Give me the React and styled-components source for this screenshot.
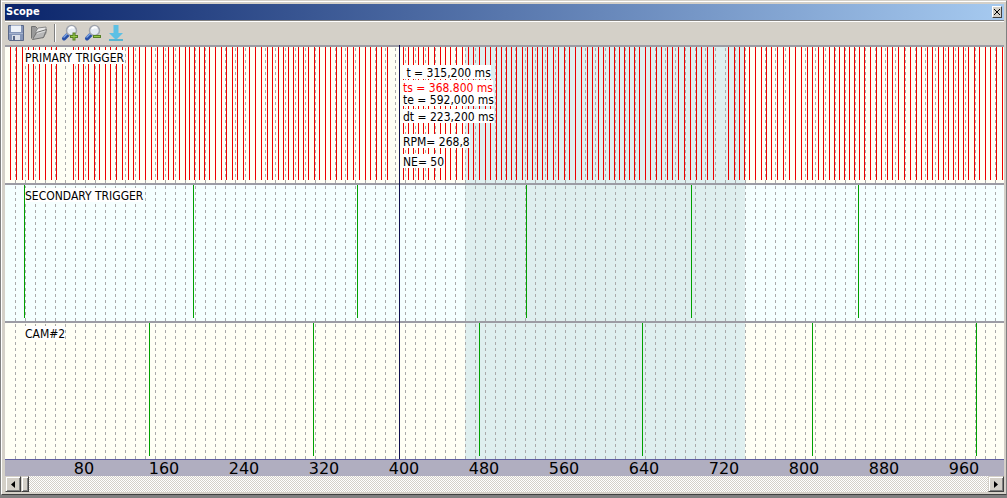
import React from "react";
import styled, { createGlobalStyle } from "styled-components";

const GlobalStyle = createGlobalStyle`
  * {
    box-sizing: border-box;
  }
  body {
    margin: 0;
    background: #808080;
    font-family: "DejaVu Sans Condensed", "DejaVu Sans", sans-serif;
    font-size: 12px;
    color: #000;
  }
`;

const Window = styled.main`
  margin-left: 1px;
  margin-bottom: 2px;
  padding: 2px;
  background: #d4d0c8;
  border: 1px solid;
  border-color: #d4d0c8 #808080 #404040 #fff;
  box-shadow: inset 0 1px #fff;
`;

const TitleBar = styled.header`
  display: flex;
  align-items: center;
  justify-content: space-between;
  height: 16px;
  margin: 1px 0 0 1px;
  padding: 0 2px 0 1px;
  background: linear-gradient(to right, #0a246a, #a6caf0);
`;

const Title = styled.h1`
  margin: 0;
  font-size: 11px;
  line-height: 16px;
  color: #fff;
`;

const CloseButton = styled.button`
  display: flex;
  align-items: center;
  justify-content: center;
  width: 10px;
  height: 12px;
  padding: 0;
  background: #d4d0c8;
  border: 1px solid;
  border-color: #fff #404040 #404040 #fff;
`;

const Toolbar = styled.div`
  display: flex;
  align-items: center;
  gap: 5px;
  height: 25px;
  margin-left: 1px;
  padding-left: 2px;
  border-top: 1px solid #808080;
  box-shadow: inset 0 1px #fff;
`;

const ToolButton = styled.button`
  display: flex;
  width: 18px;
  height: 18px;
  padding: 0;
  background: none;
  border: 0;
`;

const Separator = styled.span`
  width: 2px;
  height: 18px;
  margin-left: 1px;
  border-left: 1px solid #808080;
  border-right: 1px solid #fff;
`;

const Plot = styled.section`
  position: relative;
  margin-left: 1px;
`;

const Channel = styled.div`
  position: relative;
  height: 138px;
  padding: 3px 0 0 20px;
  border-top: 2px solid #9c9ca4;
  background: ${(props) => props.$background};
`;

const Wave = styled.svg`
  position: absolute;
  top: 0;
  left: 0;
  width: 100%;
  height: 100%;
`;

const Label = styled.span`
  position: relative;
  display: block;
  width: max-content;
  height: 14px;
  padding-top: 1px;
  line-height: 14px;
  white-space: pre;
  background: #fff;
`;

const Cursor = styled.div`
  position: absolute;
  top: 0;
  bottom: 17px;
  left: 394px;
  width: 1px;
  background: #101050;
`;

const Readout = styled.div`
  position: absolute;
  top: 20px;
  left: 398px;
`;

const Reading = styled(Label)`
  margin-top: ${(props) => props.$gap || 0}px;
  color: ${(props) => props.$color || "#000"};
`;

const Axis = styled.div`
  display: flex;
  height: 17px;
  padding-left: 39px;
  border-top: 1px solid #6060a0;
  background: #b0aec0;
`;

const Tick = styled.span`
  flex: 0 0 80px;
  font-family: "DejaVu Sans", sans-serif;
  font-size: 16px;
  line-height: 18px;
  text-align: center;
`;

const ScrollBar = styled.div`
  display: flex;
  height: 16px;
  margin-left: 1px;
  background: repeating-conic-gradient(#d4d0c8 0 25%, #fff 0 50%) 0 0 / 2px 2px;
`;

const ScrollButton = styled.button`
  display: flex;
  align-items: center;
  justify-content: center;
  width: ${(props) => props.$width || 16}px;
  height: 16px;
  margin-left: ${(props) => (props.$end ? "auto" : 0)};
  padding: 0;
  background: #d4d0c8;
  border: 1px solid;
  border-color: #d4d0c8 #404040 #404040 #d4d0c8;
  box-shadow: inset 1px 1px #fff, inset -1px -1px #808080;
`;

// pulse positions, in px from the left side of the plot
const primary = [
  5, 11, 17, 23, 28, 34, 40, 46, 51, 68, 73, 78, 83, 89, 94, 100, 105, 111,
  117, 123, 128, 134, 140, 146, 152, 158, 163, 168, 174, 180, 184, 189, 194,
  199, 204, 210, 216, 221, 227, 232, 238, 244, 250, 256, 262, 267, 273, 278,
  283, 288, 293, 298, 303, 309, 314, 320, 325, 331, 336, 342, 348, 354, 360,
  365, 371, 376, 382, 398, 403, 408, 413, 418, 423, 429, 435, 440, 445, 451,
  457, 463, 468, 474, 480, 485, 491, 496, 501, 506, 511, 517, 522, 527, 532,
  537, 542, 548, 553, 559, 564, 570, 576, 582, 587, 593, 598, 604, 609, 614,
  619, 624, 629, 634, 640, 645, 651, 656, 662, 667, 673, 679, 685, 691, 696,
  702, 708, 723, 729, 734, 739, 744, 750, 756, 761, 766, 772, 778, 784, 790,
  796, 802, 807, 813, 818, 824, 829, 834, 839, 844, 849, 854, 859, 865, 871,
  876, 882, 887, 893, 899, 905, 911, 916, 922, 927, 933, 938, 943, 948, 953,
  958, 963, 969, 974, 980, 985, 991, 997,
];

const channels = [
  { name: "PRIMARY TRIGGER", background: "#fffff5", color: "#ee0000", pulses: primary },
  {
    name: "SECONDARY TRIGGER",
    background: "#f5ffff",
    color: "#00a000",
    pulses: [19, 188, 352, 521, 686, 853],
  },
  {
    name: "CAM#2",
    background: "#fffff5",
    color: "#00a000",
    pulses: [144, 308, 474, 637, 807, 971],
  },
];

const readings = [
  { text: " t = 315,200 ms" },
  { text: "ts = 368.800 ms", gap: 1, color: "#ff0000" },
  { text: "te = 592,000 ms", gap: -2 },
  { text: "dt = 223,200 ms", gap: 3 },
  { text: "RPM= 268,8", gap: 11 },
  { text: "NE= 50", gap: 6 },
];

const ticks = [80, 160, 240, 320, 400, 480, 560, 640, 720, 800, 880, 960];

const SaveIcon = () => (
  <svg width="18" height="18" viewBox="0 0 18 18">
    <path d="M1.500 1.500h15v15H2.500l-1-1z" fill="#8495b8" stroke="#5a6888" />
    <path d="M4 1h10v7H4z" fill="#eef2f8" />
    <path d="M4 1h10v1H4z" fill="#a8b4cc" />
    <path d="M2 9h14v1H2z" fill="#a4b2cc" />
    <path d="M5 11h8v5H5z" fill="#dce0e8" />
    <path d="M6 12h2v4H6z" fill="#5a6888" />
  </svg>
);

const OpenIcon = () => (
  <svg width="18" height="18" viewBox="0 0 18 18">
    <path d="M1.500 14.500v-12h4l2 2h4v3" fill="#9a9a9a" stroke="#707070" />
    <path d="m5 9 3-5 8-1v6l-3 5z" fill="#e8e8e8" stroke="#888" />
    <path d="m2.500 15.500 4-7 10-3-3 8z" fill="#b8b8b8" stroke="#707070" />
    <path d="m7 9.500 8.500-2.500" stroke="#dedede" />
  </svg>
);

const ZoomIcon = ({ plus }) => (
  <svg width="18" height="18" viewBox="0 0 18 18">
    <path d="m3 14.500 4-4" stroke="#2850a8" strokeWidth="4" strokeLinecap="round" />
    <path d="m2.500 13.500 4-4" stroke="#7ca4e4" strokeWidth="1.500" />
    <circle cx="10.500" cy="6.500" r="5" fill="#e4eaf2" stroke="#a0a4ac" strokeWidth="1.500" />
    <path d="M8 5q2-3 5-1" fill="none" stroke="#fff" strokeWidth="2" />
    <path d="M9 11h8v3H9z" fill="#568024" />
    {plus && <path d="M11.500 8.500h3v8h-3z" fill="#568024" />}
    <path d="M10 12h6v1h-6z" fill="#98c848" />
    {plus && <path d="M12.500 9.500h1v6h-1z" fill="#98c848" />}
  </svg>
);

const DownloadIcon = () => (
  <svg width="18" height="18" viewBox="0 0 18 18">
    <path d="M6.500 1h5v8H16l-7 7-7-7h4.500z" fill="#5cc0e4" />
    <path d="M2 15h14v2H2z" fill="#58b4d0" />
  </svg>
);

function Pulses({ id, color, pulses }) {
  return (
    <Wave aria-hidden="true" shapeRendering="crispEdges">
      <defs>
        <pattern id={id} width="10" height="6" patternUnits="userSpaceOnUse">
          <rect y="1" width="1" height="3" fill="#aaaaaa" />
        </pattern>
      </defs>
      <rect x="460" width="280" height="136" fill="#dfefef" />
      <g transform="translate(10 0)">
        <rect width="100%" height="136" fill={`url(#${id})`} />
      </g>
      {pulses.map((x) => (
        <rect key={x} x={x} width="1" height="133" fill={color} />
      ))}
    </Wave>
  );
}

function App() {
  return (
    <Window>
      <GlobalStyle />
      <TitleBar>
        <Title>Scope</Title>
        <CloseButton aria-label="Close">
          <svg width="6" height="6" viewBox="0 0 6 6">
            <path d="m0 0 6 6M6 0 0 6" stroke="#000" />
          </svg>
        </CloseButton>
      </TitleBar>
      <Toolbar>
        <ToolButton aria-label="Save">
          <SaveIcon />
        </ToolButton>
        <ToolButton aria-label="Open">
          <OpenIcon />
        </ToolButton>
        <Separator />
        <ToolButton aria-label="Zoom in">
          <ZoomIcon plus />
        </ToolButton>
        <ToolButton aria-label="Zoom out">
          <ZoomIcon />
        </ToolButton>
        <ToolButton aria-label="Download">
          <DownloadIcon />
        </ToolButton>
      </Toolbar>
      <Plot>
        {channels.map((c, idx) => (
          <Channel key={c.name} $background={c.background}>
            <Pulses id={`grid${idx}`} color={c.color} pulses={c.pulses} />
            <Label>{c.name}</Label>
          </Channel>
        ))}
        <Axis>
          {ticks.map((t) => (
            <Tick key={t}>{t}</Tick>
          ))}
        </Axis>
        <Cursor />
        <Readout>
          {readings.map((r) => (
            <Reading key={r.text} $gap={r.gap} $color={r.color}>
              {r.text}
            </Reading>
          ))}
        </Readout>
      </Plot>
      <ScrollBar>
        <ScrollButton aria-label="Scroll left">
          <svg width="4" height="7" viewBox="0 0 4 7">
            <path d="M4 0v7L0 3.500z" />
          </svg>
        </ScrollButton>
        <ScrollButton $width={8} aria-label="Scroll position" />
        <ScrollButton $end aria-label="Scroll right">
          <svg width="4" height="7" viewBox="0 0 4 7">
            <path d="M0 0v7l4-3.500z" />
          </svg>
        </ScrollButton>
      </ScrollBar>
    </Window>
  );
}

export default App;
